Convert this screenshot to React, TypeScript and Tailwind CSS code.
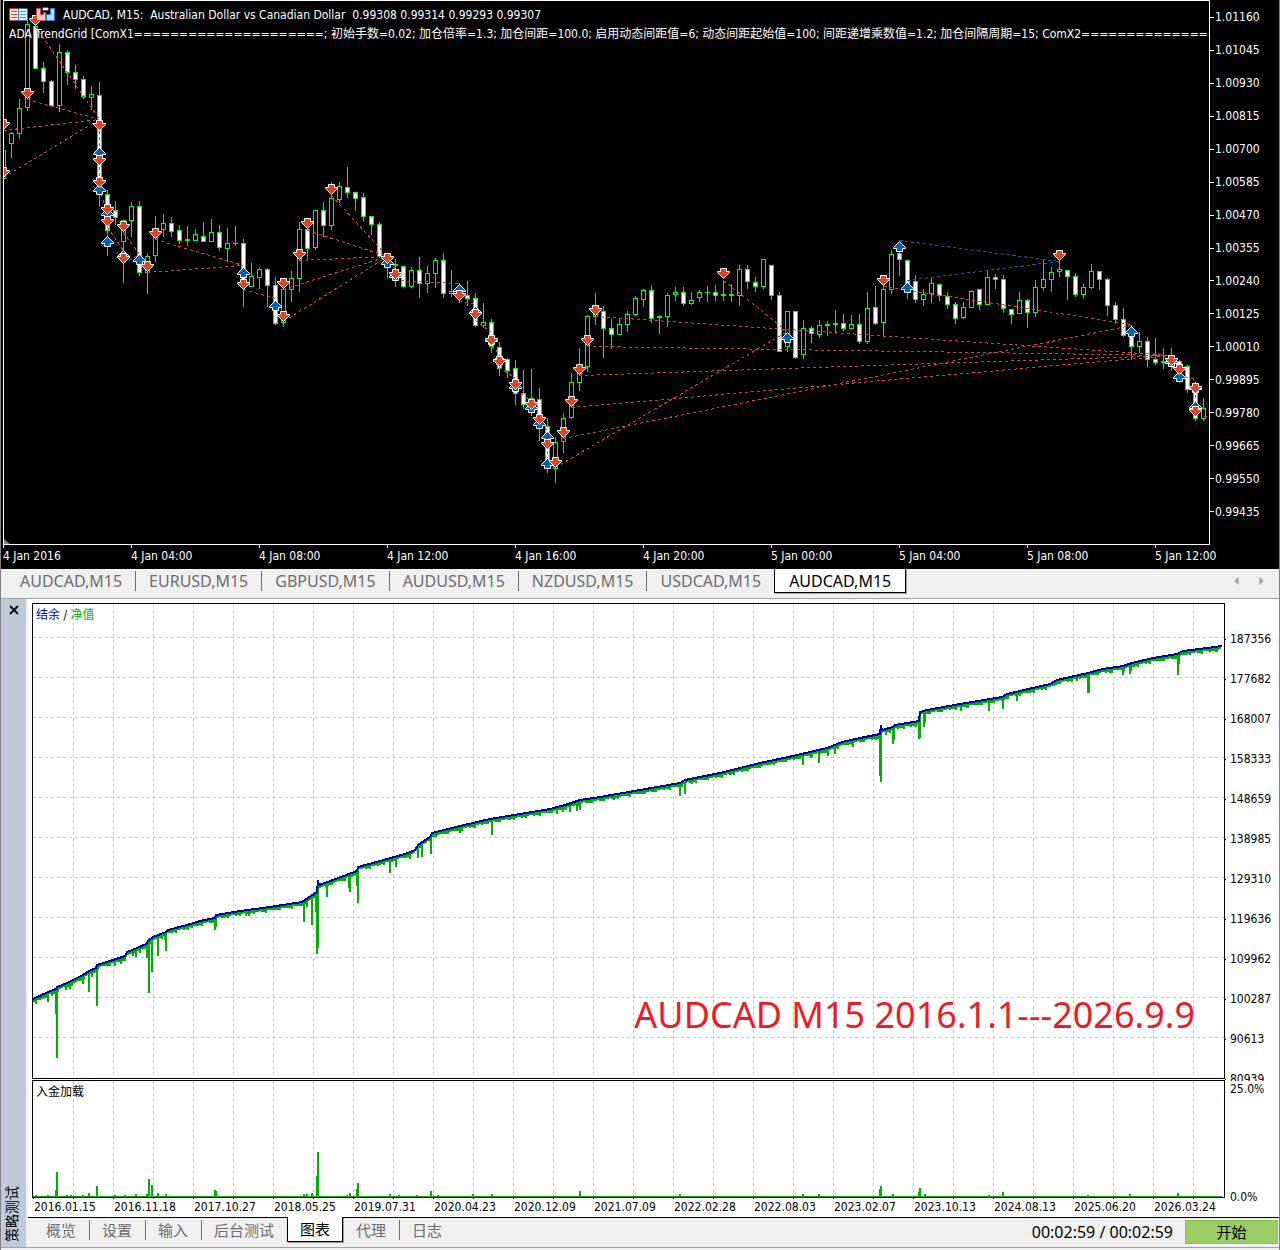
import React from "react";

const UI = "font-['DejaVu_Sans_Condensed','DejaVu_Sans','Noto_Sans_CJK_SC',sans-serif]";
const TAB = "font-['Noto_Sans','Noto_Sans_CJK_SC',sans-serif]";

/* [high, body top, body bottom, low, 1 = bearish (filled)] */
const candles: number[][] = [
  [150, 150, 178, 178, 0], [132, 133, 143, 157, 0], [99, 108, 133, 138, 0], [20, 24, 107, 110, 0],
  [20, 26, 68, 68, 1], [62, 68, 81, 92, 1], [80, 81, 105, 105, 1], [44, 52, 105, 111, 0],
  [50, 52, 72, 84, 1], [65, 72, 79, 88, 1], [76, 79, 96, 98, 1], [86, 94, 97, 109, 0],
  [82, 95, 190, 206, 1], [190, 194, 230, 255, 1], [201, 210, 217, 224, 1], [220, 220, 241, 282, 0],
  [202, 206, 220, 236, 0], [201, 206, 272, 275, 1], [253, 256, 272, 293, 0], [216, 232, 255, 261, 0],
  [214, 223, 229, 236, 0], [217, 223, 231, 236, 1], [225, 230, 240, 243, 1], [226, 239, 240, 245, 0],
  [229, 234, 240, 240, 0], [222, 236, 241, 241, 1], [219, 232, 241, 241, 0], [225, 232, 247, 250, 1],
  [228, 243, 248, 261, 0], [226, 243, 243, 245, 0], [239, 243, 287, 306, 1], [263, 276, 286, 286, 0],
  [267, 269, 277, 288, 0], [268, 269, 285, 306, 1], [277, 285, 323, 324, 1], [285, 289, 322, 326, 0],
  [271, 278, 289, 301, 0], [222, 229, 278, 291, 0], [223, 229, 248, 260, 1], [210, 210, 247, 249, 0],
  [202, 210, 225, 236, 1], [182, 198, 225, 229, 0], [182, 186, 199, 202, 0], [167, 187, 192, 197, 1],
  [192, 192, 198, 210, 1], [193, 197, 216, 221, 1], [216, 216, 224, 234, 1], [222, 224, 256, 257, 1],
  [253, 257, 262, 277, 1], [259, 264, 265, 286, 0], [266, 266, 286, 287, 1], [267, 270, 286, 287, 0],
  [257, 270, 283, 297, 1], [266, 273, 283, 292, 0], [258, 260, 273, 287, 0], [253, 260, 293, 297, 1],
  [270, 291, 293, 296, 0], [283, 290, 296, 302, 1], [281, 295, 298, 305, 1], [293, 298, 325, 326, 1],
  [303, 322, 325, 327, 0], [319, 322, 346, 352, 1], [342, 347, 368, 375, 1], [358, 359, 370, 377, 1],
  [360, 368, 393, 404, 1], [370, 393, 404, 408, 1], [369, 398, 410, 415, 1], [388, 399, 422, 440, 1],
  [418, 426, 468, 472, 1], [437, 442, 468, 482, 0], [413, 418, 441, 452, 0], [373, 382, 417, 418, 0],
  [348, 372, 382, 390, 0], [315, 316, 366, 371, 0], [293, 312, 316, 324, 0], [306, 311, 328, 357, 1],
  [319, 328, 334, 348, 1], [319, 324, 334, 334, 0], [311, 314, 324, 331, 0], [296, 298, 314, 315, 0],
  [289, 290, 299, 306, 0], [285, 290, 318, 322, 1], [315, 316, 317, 333, 0], [293, 295, 316, 326, 0],
  [287, 292, 294, 300, 0], [287, 292, 303, 305, 1], [292, 300, 303, 304, 0], [290, 292, 297, 301, 0],
  [286, 292, 292, 301, 0], [285, 292, 295, 300, 1], [280, 294, 295, 300, 0], [284, 294, 295, 301, 0],
  [265, 269, 295, 305, 0], [265, 269, 281, 288, 1], [277, 282, 286, 291, 1], [259, 259, 286, 288, 0],
  [265, 265, 295, 299, 1], [292, 295, 351, 351, 1], [311, 311, 346, 351, 0], [311, 311, 357, 358, 1],
  [320, 328, 354, 358, 0], [326, 328, 333, 342, 1], [320, 325, 334, 337, 0], [321, 324, 325, 335, 0],
  [310, 323, 324, 333, 0], [314, 323, 328, 330, 1], [315, 324, 328, 328, 0], [314, 324, 341, 343, 1],
  [292, 308, 341, 343, 0], [286, 307, 323, 324, 1], [284, 289, 322, 335, 0], [250, 254, 289, 293, 0],
  [251, 253, 259, 275, 1], [260, 260, 290, 298, 1], [275, 281, 299, 302, 1], [289, 294, 299, 305, 0],
  [278, 283, 293, 302, 0], [284, 284, 295, 300, 1], [292, 296, 304, 308, 1], [302, 304, 318, 323, 1],
  [302, 307, 317, 318, 0], [290, 291, 307, 307, 0], [289, 289, 304, 309, 1], [271, 277, 304, 304, 0],
  [274, 277, 279, 288, 1], [275, 279, 308, 312, 1], [309, 309, 314, 323, 1], [292, 300, 313, 313, 0],
  [299, 300, 312, 327, 1], [280, 287, 312, 316, 0], [260, 279, 287, 290, 0], [267, 272, 279, 291, 0],
  [260, 269, 271, 276, 0], [270, 270, 276, 299, 1], [273, 276, 294, 296, 1], [284, 287, 294, 298, 0],
  [264, 271, 287, 288, 0], [271, 271, 279, 289, 1], [278, 279, 305, 315, 1], [302, 305, 319, 323, 1],
  [308, 319, 335, 336, 1], [325, 333, 346, 359, 1], [332, 341, 346, 352, 0], [337, 341, 359, 366, 1],
  [338, 359, 362, 364, 1], [348, 361, 362, 368, 0], [348, 360, 362, 370, 1], [360, 361, 380, 382, 1],
  [365, 366, 389, 392, 1], [382, 389, 418, 420, 1], [398, 408, 418, 420, 0],
];

/* [x, y, 1 = buy (up) / 0 = sell (down)] */
const deals: number[][] = [
  [3, 124, 0], [3, 172, 0], [27, 93, 0], [35, 20, 0], [99, 125, 0], [99, 152, 1], [99, 160, 0], [99, 189, 1],
  [99, 182, 0], [107, 213, 1], [107, 209, 0], [107, 221, 0], [107, 241, 1], [123, 226, 0], [123, 255, 1],
  [123, 258, 0], [139, 259, 1], [147, 266, 0], [155, 233, 0], [243, 272, 1], [243, 284, 0], [283, 283, 0],
  [275, 305, 1], [283, 316, 0], [299, 254, 0], [307, 223, 0], [331, 189, 0], [387, 262, 1], [387, 258, 0],
  [395, 275, 1], [395, 274, 0], [459, 289, 1], [459, 295, 0], [475, 311, 1], [475, 314, 0], [491, 339, 1],
  [491, 340, 0], [499, 359, 1], [499, 361, 0], [515, 386, 1], [515, 384, 0], [531, 407, 1], [531, 404, 0],
  [539, 423, 1], [539, 419, 0], [547, 436, 1], [547, 444, 0], [547, 463, 1], [555, 462, 0], [563, 432, 0],
  [571, 401, 0], [579, 369, 0], [587, 340, 0], [595, 310, 0], [723, 273, 0], [787, 337, 1], [883, 280, 0],
  [899, 246, 1], [907, 287, 1], [1059, 255, 0], [1131, 331, 1], [1171, 361, 1], [1171, 360, 0],
  [1179, 376, 1], [1179, 369, 0], [1195, 387, 1], [1195, 388, 0], [1195, 406, 1], [1195, 411, 0],
];

const sellLines: number[][] = [
  [35, 26, 99, 119], [27, 99, 99, 119], [3, 130, 99, 119], [3, 177, 99, 119], [99, 130, 99, 188], [99, 188, 107, 215],
  [107, 227, 123, 250], [123, 232, 139, 254], [123, 263, 139, 254], [155, 239, 243, 265], [147, 272, 243, 265],
  [243, 289, 275, 298], [331, 195, 387, 256], [307, 230, 387, 256], [299, 260, 387, 256], [283, 289, 387, 256],
  [283, 321, 387, 256], [387, 264, 395, 268], [395, 280, 459, 283], [459, 301, 475, 304], [475, 320, 491, 332],
  [491, 346, 499, 353], [499, 367, 515, 378], [515, 390, 531, 400], [531, 410, 539, 415], [539, 425, 547, 430],
  [547, 450, 547, 457], [555, 467, 787, 331], [595, 316, 1171, 355], [587, 346, 1171, 355], [579, 375, 1171, 355],
  [571, 407, 1171, 355], [563, 438, 1131, 325], [723, 280, 787, 331], [883, 286, 1131, 324], [1171, 366, 1179, 371],
  [1179, 375, 1195, 379], [1195, 394, 1195, 402], [1203, 416, 1209, 416],
];
const buyLines: number[][] = [[899, 240, 1059, 261], [907, 280, 1059, 261]];

const prices = ["1.01160", "1.01045", "1.00930", "1.00815", "1.00700", "1.00585", "1.00470", "1.00355", "1.00240", "1.00125", "1.00010", "0.99895", "0.99780", "0.99665", "0.99550", "0.99435"];
const times = ["4 Jan 2016", "4 Jan 04:00", "4 Jan 08:00", "4 Jan 12:00", "4 Jan 16:00", "4 Jan 20:00", "5 Jan 00:00", "5 Jan 04:00", "5 Jan 08:00", "5 Jan 12:00"];
const symbols = ["AUDCAD,M15", "EURUSD,M15", "GBPUSD,M15", "AUDUSD,M15", "NZDUSD,M15", "USDCAD,M15"];
const balances = ["187356", "177682", "168007", "158333", "148659", "138985", "129310", "119636", "109962", "100287", "90613", "80939"];
const dates = ["2016.01.15", "2016.11.18", "2017.10.27", "2018.05.25", "2019.07.31", "2020.04.23", "2020.12.09", "2021.07.09", "2022.02.28", "2022.08.03", "2023.02.07", "2023.10.13", "2024.08.13", "2025.06.20", "2026.03.24"];

const balance: number[][] = [
  [33, 999], [48, 992], [56, 989], [57, 987], [67, 983], [73, 980], [83, 975], [89, 971], [96, 968], [97, 965],
  [113, 960], [125, 956], [127, 952], [137, 948], [146, 944], [149, 940], [153, 937], [166, 932], [168, 930],
  [187, 925], [200, 921], [215, 918], [216, 915], [240, 911], [270, 907], [302, 902], [317, 892], [318, 880],
  [319, 885], [333, 880], [357, 871], [358, 867], [380, 861], [405, 854], [415, 850], [418, 845], [430, 837],
  [432, 833], [460, 826], [490, 819], [520, 814], [550, 809], [565, 805], [580, 800], [600, 797], [640, 790],
  [680, 783], [685, 780], [720, 773], [760, 763], [793, 756], [827, 748], [842, 742], [860, 738], [880, 734],
  [881, 725], [882, 730], [893, 727], [895, 725], [919, 721], [920, 712], [927, 710], [960, 704], [990, 699],
  [1002, 697], [1007, 694], [1050, 684], [1057, 680], [1088, 673], [1103, 669], [1123, 666], [1132, 663],
  [1153, 658], [1177, 654], [1183, 651], [1207, 648], [1222, 646],
];
const drawdowns: number[][] = [
  [36, 1004], [48, 1002], [52, 996], [56, 1014], [57, 1058], [66, 990], [70, 989], [83, 984], [89, 992], [92, 977],
  [97, 1006], [115, 966], [121, 964], [125, 961], [133, 956], [136, 957], [140, 953], [147, 958], [149, 993],
  [152, 972], [158, 956], [162, 938], [165, 940], [166, 951], [192, 928], [202, 926], [215, 930], [216, 927],
  [232, 915], [246, 916], [249, 916], [272, 910], [304, 922], [307, 907], [312, 925], [316, 912], [317, 954],
  [318, 948], [327, 897], [345, 881], [349, 888], [350, 892], [357, 886], [358, 903], [390, 873], [396, 867],
  [410, 859], [418, 858], [422, 857], [431, 854], [446, 833], [460, 833], [475, 828], [492, 835], [557, 814],
  [563, 812], [570, 812], [577, 811], [580, 810], [614, 800], [645, 794], [680, 796], [685, 794], [692, 784],
  [803, 765], [811, 758], [819, 763], [828, 756], [835, 754], [853, 747], [876, 740], [880, 776], [881, 782],
  [886, 735], [893, 744], [894, 740], [911, 727], [919, 739], [920, 738], [924, 727], [925, 722], [961, 711],
  [967, 708], [989, 711], [1003, 709], [1017, 701], [1053, 686], [1077, 681], [1088, 693], [1089, 693],
  [1110, 673], [1123, 675], [1130, 674], [1131, 671], [1138, 667], [1178, 675], [1179, 664], [1217, 652],
];
const loads: number[][] = [
  [36, 1195], [48, 1195], [56, 1190], [57, 1172], [67, 1195], [71, 1195], [83, 1195], [89, 1193], [97, 1186],
  [115, 1195], [125, 1195], [136, 1194], [147, 1194], [149, 1179], [152, 1185], [158, 1193], [166, 1194],
  [215, 1190], [216, 1191], [304, 1194], [307, 1194], [312, 1193], [317, 1176], [318, 1152], [347, 1195],
  [350, 1193], [357, 1189], [358, 1183], [390, 1194], [399, 1195], [417, 1195], [431, 1191], [438, 1195],
  [473, 1194], [492, 1194], [580, 1191], [680, 1194], [803, 1194], [819, 1194], [880, 1189], [881, 1186],
  [893, 1194], [919, 1192], [920, 1188], [925, 1194], [989, 1195], [1003, 1192], [1088, 1195], [1130, 1194],
  [1178, 1193],
];

function balanceAt(x: number) {
  for (let i = 1; i < balance.length; i++) {
    const [x0, y0] = balance[i - 1];
    const [x1, y1] = balance[i];
    if (x <= x1) return Math.round(y0 + ((y1 - y0) * (x - x0)) / (x1 - x0));
  }
  return 646;
}

const equityPath = Array.from({ length: 594 }, (_, i) => {
  const x = 34 + i * 2;
  const noise = (i * 7919) % 13;
  return `M${x} ${balanceAt(x)}v${noise > 10 ? 5 : noise > 5 ? 4 : 3}`;
}).join("");
const drawdownPath = drawdowns.map(([x, y]) => `M${x} ${balanceAt(x)}V${y}`).join("");
const loadPath = loads.map(([x, y]) => `M${x} 1197V${y}`).join("");
const columns = Array.from({ length: 29 }, (_, i) => 73.5 + i * 40);
const rows = Array.from({ length: 11 }, (_, i) => 637.5 + i * 40);

function DealArrow({ x, y, up }: { x: number; y: number; up: boolean }) {
  const d = up
    ? "M0 -5L6 1V2H3V5H-3V2H-6V1Z"
    : "M0 5L6 -1V-2H3V-5H-3V-2H-6V-1Z";
  return (
    <path d={d} transform={`translate(${x + 0.5} ${y + 0.5})`} fill={up ? "#0560b0" : "#e2421c"} stroke="#fff" strokeWidth="1" />
  );
}

function PriceChart() {
  return (
    <svg className="block h-[545px] w-full" viewBox="3 0 1207 545" preserveAspectRatio="none" role="img" aria-label="AUDCAD M15">
      <g shapeRendering="crispEdges">
        {candles.map(([h, t, b, l, f], i) => {
          const x = 3 + i * 8;
          return (
            <g key={i}>
              <rect x={x} y={h} width="1" height={l - h + 1} fill="#00ff00" />
              {b - t < 2 ? (
                <rect x={x - 2} y={t} width="5" height={b - t + 1} fill="#00ff00" />
              ) : (
                <rect x={x - 1.5} y={t + 0.5} width="4" height={b - t} fill={f ? "#fff" : "#000"} stroke="#00ff00" />
              )}
            </g>
          );
        })}
        {sellLines.map(([a, b, c, d], i) => (
          <line key={i} x1={a + 0.5} y1={b + 0.5} x2={c + 0.5} y2={d + 0.5} stroke="#e2421c" strokeDasharray="3 3" />
        ))}
        {buyLines.map(([a, b, c, d], i) => (
          <line key={i} x1={a + 0.5} y1={b + 0.5} x2={c + 0.5} y2={d + 0.5} stroke="#0560b0" strokeDasharray="3 3" />
        ))}
      </g>
      {deals.map(([x, y, up], i) => (
        <DealArrow key={i} x={x} y={y} up={up === 1} />
      ))}
      <path d="M4 539l6 5h-6z" fill="#778899" />
      <rect x="3.5" y="0.5" width="1206" height="544" fill="none" stroke="#fff" shapeRendering="crispEdges" />
    </svg>
  );
}

function TitleIcons() {
  return (
    <svg className="block h-4 w-[50px]" viewBox="0 0 50 16" aria-hidden="true">
      <rect x="0.5" y="1.5" width="9" height="12" rx="1" fill="#ffe1dc" stroke="#c8372d" />
      <rect x="9.5" y="1.5" width="9" height="12" rx="1" fill="#e1f1ff" stroke="#2a78b8" />
      <path d="M2 4.500h6M2 7.500h6M2 10.500h6" stroke="#d9534a" />
      <path d="M11 4.500h6M11 7.500h6M11 10.500h6" stroke="#4a97d2" />
      <path d="M27.500 1.500h4v6h3v-2h2v8h-9z" fill="#ffc9c2" stroke="#d9463c" />
      <path d="M45.500 1.500h-4v6h-4v6h8z" fill="#a9dcff" stroke="#2a86cc" />
      <rect x="33.500" y="0.500" width="6" height="3" rx="1" fill="#eee" stroke="#555" />
    </svg>
  );
}

function EquityChart() {
  return (
    <svg className="block h-[476px] w-full" viewBox="32 603 1193 476" preserveAspectRatio="none" role="img" aria-label="结余 / 净值">
      <g shapeRendering="crispEdges" fill="none">
        {columns.map((x) => (
          <line key={x} x1={x} x2={x} y1="604" y2="1078" stroke="#c8c8c8" strokeDasharray="3 3" />
        ))}
        {rows.map((y) => (
          <line key={y} x1="33" x2="1224" y1={y} y2={y} stroke="#c8c8c8" strokeDasharray="3 3" />
        ))}
        <path d={equityPath} stroke="#00b000" strokeWidth="2" />
        <path d={drawdownPath} stroke="#00b000" strokeWidth="2" />
        <polyline points={balance.map((p) => p.join(",")).join(" ")} stroke="#0000b0" strokeWidth="2" />
        <rect x="32.5" y="603.5" width="1192" height="475" stroke="#000" />
      </g>
    </svg>
  );
}

function LoadChart() {
  return (
    <svg className="block h-[119px] w-full" viewBox="32 1080 1193 119" preserveAspectRatio="none" role="img" aria-label="入金加载">
      <g shapeRendering="crispEdges" fill="none">
        {columns.map((x) => (
          <line key={x} x1={x} x2={x} y1="1081" y2="1196" stroke="#c8c8c8" strokeDasharray="3 3" />
        ))}
        <path d={loadPath} stroke="#00b000" strokeWidth="2" />
        <path d="M33 1196.500H1222" stroke="#00b000" />
        <rect x="32.5" y="1080.5" width="1192" height="117" stroke="#000" />
        {dates.map((d, i) => (
          <path key={d} d={`M${33.5 + i * 80} 1198v1M${73.5 + i * 80} 1198v1`} stroke="#000" />
        ))}
      </g>
    </svg>
  );
}

function Separator() {
  return <span className="h-5 w-px shrink-0 bg-[#6d6d6d]" />;
}

function PanelTab({ label, line }: { label: string; line?: boolean }) {
  return (
    <>
      <button type="button" className="h-6 pr-[13px] pl-3 text-[#6d6d6d]">{label}</button>
      {line && <Separator />}
    </>
  );
}

export default function App() {
  return (
    <div className={`${UI} overflow-hidden border-x border-[#808080] bg-[#f0f0f0] text-[12px] leading-4 text-black`}>
      <section className="bg-black text-white">
        <div className="flex pl-0.5">
          <div className="relative min-w-0 flex-1 overflow-hidden">
            <PriceChart />
            <div className="absolute inset-x-0 top-[6px] pl-[6px]">
              <div className="flex items-center gap-1 whitespace-pre">
                <TitleIcons />
                <h1 className="pt-px">{"AUDCAD, M15:  Australian Dollar vs Canadian Dollar  0.99308 0.99314 0.99293 0.99307"}</h1>
              </div>
              <p className="mt-[3px] overflow-hidden whitespace-nowrap">
                ADA TrendGrid [ComX1=====================; 初始手数=0.02; 加仓倍率=1.3; 加仓间距=100.0; 启用动态间距值=6; 动态间距起始值=100; 间距递增乘数值=1.2; 加仓间隔周期=15; ComX2=====================
              </p>
            </div>
          </div>
          <ul className="flex h-[528px] w-[69px] flex-col pt-px">
            {prices.map((p) => (
              <li key={p} className="flex flex-1 items-center gap-px">
                <span className="h-px w-1 bg-white" />
                {p}
              </li>
            ))}
          </ul>
        </div>
        <ul className="flex h-6 overflow-hidden pl-0.5">
          {times.map((t) => (
            <li key={t} className="w-32 shrink-0">
              <span className="block h-[3px] w-px bg-white" />
              {t}
            </li>
          ))}
        </ul>
      </section>

      <nav className={`${TAB} flex h-[30px] items-start border-b border-[#a0a0a0] text-[16px] leading-6`}>
        <div className="flex items-center pl-[6px]">
          {symbols.map((s, i) => (
            <React.Fragment key={s}>
              <button type="button" className="h-6 px-[13px] text-[#6d6d6d]">{s}</button>
              {i < symbols.length - 1 && <Separator />}
            </React.Fragment>
          ))}
        </div>
        <button type="button" className="h-6 border border-t-0 border-black bg-white px-[14px] leading-[22px] shadow-[1px_1px_0_#a0a0a0]">AUDCAD,M15</button>
        <div className="ml-auto flex h-6 items-center gap-5 pr-[15px]">
          <button type="button" aria-label="上一个">
            <svg className="block h-2 w-[5px]" viewBox="0 0 5 8"><path d="M4.500 0v8L0.500 4z" fill="#a0a0a0" /></svg>
          </button>
          <button type="button" aria-label="下一个">
            <svg className="block h-2 w-[5px]" viewBox="0 0 5 8"><path d="M0.500 0v8L4.500 4z" fill="#a0a0a0" /></svg>
          </button>
        </div>
      </nav>

      <section className="flex border-b border-[#a0a0a0]">
        <aside className="flex w-[25px] shrink-0 flex-col items-center justify-between bg-[#bfcbd9] pt-[6px] pb-[5px]">
          <button type="button" aria-label="关闭">
            <svg className="block h-[10px] w-[10px]" viewBox="0 0 10 10"><path d="M1 1l8 8M9 1L1 9" stroke="#111" strokeWidth="2" /></svg>
          </button>
          <h2 className="mr-1 rotate-180 text-[14px] leading-5 [text-orientation:sideways] [writing-mode:vertical-rl]">策略测试</h2>
        </aside>

        <div className="min-w-0 flex-1 pl-0.5">
          <div className="flex bg-white pt-1 pl-1">
            <div className="min-w-0 flex-1">
              <div className="relative">
                <EquityChart />
                <p className="absolute top-1 left-1 text-[#0000b0]">
                  结余 <span className="text-black">/</span> <span className="text-[#00b000]">净值</span>
                </p>
                <p className="absolute right-[30px] bottom-10 font-['Noto_Sans',sans-serif] text-[36px] leading-[48px] whitespace-nowrap text-[#ed1c24]">
                  AUDCAD M15 2016.1.1---2026.9.9
                </p>
              </div>
              <div className="relative mt-px">
                <LoadChart />
                <p className="absolute top-1 left-1">入金加载</p>
              </div>
              <ul className="flex h-[18px] overflow-hidden pl-0.5">
                {dates.map((d) => (
                  <li key={d} className="w-20 shrink-0 last:w-[70px]">{d}</li>
                ))}
              </ul>
            </div>
            <div className="w-[54px]">
              <ul className="h-[478px] overflow-hidden pt-4">
                {balances.map((b) => (
                  <li key={b} className="flex h-10 items-center gap-1">
                    <span className="h-px w-px bg-black" />
                    {b}
                  </li>
                ))}
              </ul>
              <div className="flex h-[124px] flex-col justify-between pl-[5px]">
                <span>25.0%</span>
                <span>0.0%</span>
              </div>
            </div>
          </div>

          <div className={`${TAB} flex h-[30px] items-start border-t border-black text-[15px] leading-6`}>
            <div className="flex items-center pl-[6px]">
              <PanelTab label="概览" line />
              <PanelTab label="设置" line />
              <PanelTab label="输入" line />
              <PanelTab label="后台测试" />
            </div>
            <button type="button" className="-mt-px h-[25px] border border-t-0 border-black bg-white px-3 shadow-[1px_1px_0_#a0a0a0]">图表</button>
            <div className="flex items-center pl-px">
              <PanelTab label="代理" line />
              <PanelTab label="日志" />
            </div>
            <div className="ml-auto flex items-center gap-3 pt-0.5 pr-px">
              <span className="text-[16px]">00:02:59 / 00:02:59</span>
              <button type="button" className="h-6 w-[93px] border border-[#8bc34a] bg-[#9bcc66] leading-[22px]">开始</button>
            </div>
          </div>
        </div>
      </section>
      <div className="h-0.5 bg-[#f0f0f0]" />
    </div>
  );
}
